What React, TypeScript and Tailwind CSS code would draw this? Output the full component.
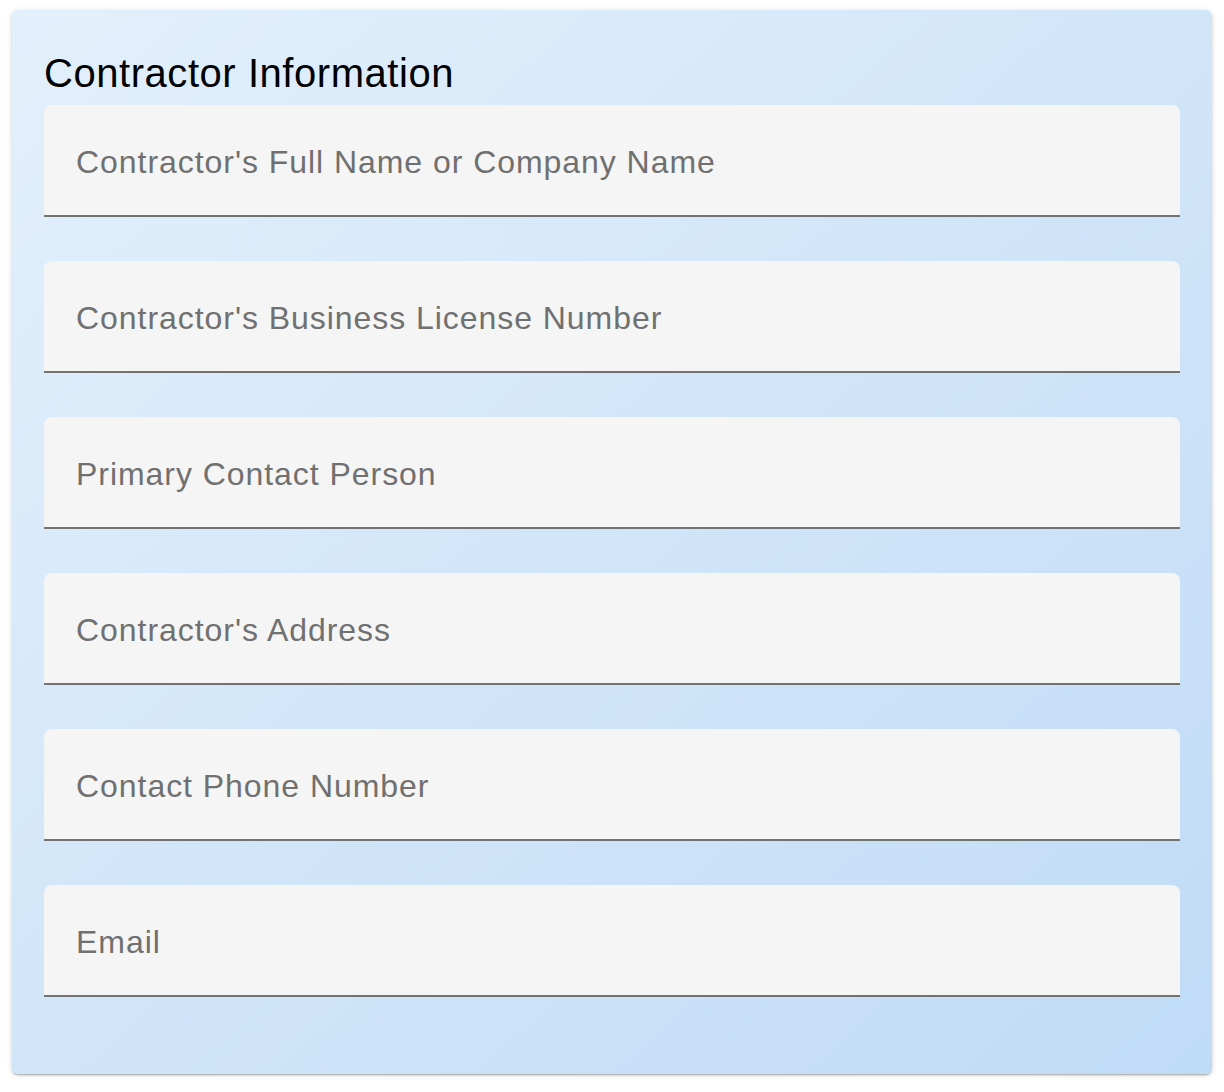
const fields = [
  "Contractor's Full Name or Company Name",
  "Contractor's Business License Number",
  "Primary Contact Person",
  "Contractor's Address",
  "Contact Phone Number",
  "Email",
];

export default function App() {
  return (
    <div className="min-h-[1092px] w-[1224px] bg-white pt-[10px] pl-[12px] font-['Liberation_Sans',Arial,sans-serif]">
      <div className="w-[1200px] h-[1064px] rounded-[6px] bg-gradient-to-br from-[#e3f0fc] to-[#c0dbf6] px-[32px] pt-[32px] shadow-[0_2px_2px_-1px_rgba(0,0,0,0.2),0_1px_2px_0_rgba(0,0,0,0.14),0_1px_6px_0_rgba(0,0,0,0.12)]">
        <h2 className="text-[40px] leading-[63px] tracking-[0.55px] text-black">
          Contractor Information
        </h2>
        <div className="flex flex-col gap-[44px]">
          {fields.map((label) => (
            <div
              key={label}
              className="h-[112px] rounded-t-[8px] bg-[#f5f5f5] border-b-2 border-[#727272] flex items-center pl-[32px] pt-[4px]"
            >
              <input
                placeholder={label}
                className="w-full bg-transparent outline-none text-[32px] tracking-[0.95px] text-[#222] placeholder:text-[#707070]"
              />
            </div>
          ))}
        </div>
      </div>
    </div>
  );
}
